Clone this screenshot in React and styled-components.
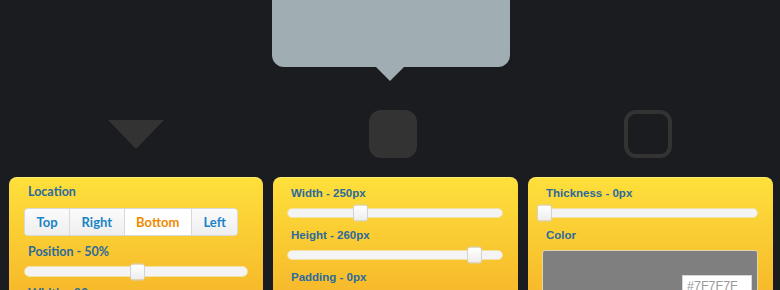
import React from 'react'
import styled, { createGlobalStyle } from 'styled-components'

const GlobalStyle = createGlobalStyle`
    html, body {
        margin: 0;
        padding: 0;
        background: #1a1c20;
    }
    body {
        width: 780px;
        height: 290px;
        overflow: hidden;
        font-family: "Liberation Sans", Arial, sans-serif;
    }
`

const locations = ["Top", "Right", "Bottom", "Left"]

function Slider({ value, $mt, $h }) {
    return (
        <StTrack $mt={$mt} $h={$h}>
            <StHandle style={{ left: `${value}%` }} />
        </StTrack>
    )
}

export default function App() {
    return (
        <>
            <GlobalStyle />
            <StPage>
                <StStage>
                    <StBubble />
                </StStage>

                <StIconRow>
                    <StIconCell>
                        <StTriangle />
                    </StIconCell>
                    <StIconCell $shift="5px">
                        <StSquare />
                    </StIconCell>
                    <StIconCell $shift="5px">
                        <StSquare $outline />
                    </StIconCell>
                </StIconRow>

                <StPanels>
                    {/* 위치 / 크기 */}
                    <StPanel $pad="8px 15px 0 15px">
                        <StLabel $font="Lato">Location</StLabel>
                        <StButtonGroup>
                            {locations.map((name) => (
                                <StButton key={name} $active={name === "Bottom"}>{name}</StButton>
                            ))}
                        </StButtonGroup>
                        <StLabel $font="Lato" $mt="9px">Position - 50%</StLabel>
                        <Slider value={50} $mt="7px" $h="11px" />
                        <StLabel $font="Lato" $mt="10px">Width - 90px</StLabel>
                    </StPanel>

                    <StPanel>
                        <StLabel>Width - 250px</StLabel>
                        <Slider value={33} $mt="8px" />
                        <StLabel $mt="10px">Height - 260px</StLabel>
                        <Slider value={86.5} $mt="8px" />
                        <StLabel $mt="10px">Padding - 0px</StLabel>
                        <Slider value={0} $mt="12px" />
                    </StPanel>

                    <StPanel>
                        <StLabel>Thickness - 0px</StLabel>
                        <Slider value={0} $mt="8px" />
                        <StLabel $mt="10px">Color</StLabel>
                        <StColorBox>
                            <StHexInput readOnly value="#7F7F7F" aria-label="color" />
                        </StColorBox>
                    </StPanel>
                </StPanels>
            </StPage>
        </>
    )
}

const StPage = styled.div`
    padding: 0 7px 0 9px;
`

const StStage = styled.div`
    height: 110px;
    display: flex;
    justify-content: center;
`

const StBubble = styled.div`
    position: relative;
    width: 238px;
    height: 67px;
    background: #a0aeb3;
    border-radius: 0 0 12px 12px;

    &::after {
        content: "";
        position: absolute;
        top: 67px;
        left: 104px;
        border-top: 14px solid #a0aeb3;
        border-left: 14px solid transparent;
        border-right: 14px solid transparent;
    }
`

const StIconRow = styled.div`
    display: grid;
    grid-template-columns: 254px 245px 245px;
    column-gap: 10px;
    height: 48px;
`

const StIconCell = styled.div`
    display: flex;
    justify-content: center;
    align-items: center;
    padding-right: ${({ $shift }) => $shift || "0"};
`

const StTriangle = styled.div`
    width: 0;
    height: 0;
    border-top: 29px solid #333333;
    border-left: 28.5px solid transparent;
    border-right: 28.5px solid transparent;
`

const StSquare = styled.div`
    width: 48px;
    height: 48px;
    box-sizing: border-box;
    border-radius: 12px;
    background: ${({ $outline }) => $outline ? "transparent" : "#333333"};
    border: ${({ $outline }) => $outline ? "4px solid #333333" : "none"};
`

const StPanels = styled.div`
    display: grid;
    grid-template-columns: 254px 245px 245px;
    column-gap: 10px;
    margin-top: 19px;
`

const StPanel = styled.div`
    display: flex;
    flex-direction: column;
    height: 160px;
    padding: ${({ $pad }) => $pad || "9px 15px 0 14px"};
    border-radius: 8px 8px 0 0;
    background: linear-gradient(180deg, #fee03c 0px, #f8c22e 90px, #f5ad28 150px);
    box-shadow: inset 0 1px 0 rgba(255, 255, 255, 0.25);
`

const StLabel = styled.div`
    margin-top: ${({ $mt }) => $mt || "0"};
    padding-left: 4px;
    font-family: ${({ $font }) => $font ? `"${$font}", "Liberation Sans", sans-serif` : `"Liberation Sans", Arial, sans-serif`};
    font-size: ${({ $font }) => $font ? "12.5px" : "11.5px"};
    font-weight: 700;
    line-height: 14px;
    color: #2b6a9e;
    white-space: nowrap;
`

const StButtonGroup = styled.div`
    display: inline-flex;
    align-self: flex-start;
    margin-top: 9px;
    height: 28px;
    box-sizing: border-box;
    border: 1px solid #d9d9d9;
    border-radius: 4px;
    overflow: hidden;
    background: #f4f4f4;
`

const StButton = styled.div`
    display: flex;
    align-items: center;
    padding: 0 11.5px;
    font-family: "Lato", "Liberation Sans", sans-serif;
    font-size: 13px;
    font-weight: 700;
    color: ${({ $active }) => $active ? "#f08a00" : "#1a84c6"};
    background: ${({ $active }) => $active ? "#ffffff" : "linear-gradient(180deg, #fbfbfb, #eeeeee)"};
    border-left: 1px solid #d9d9d9;

    &:first-child {
        border-left: none;
    }
`

const StTrack = styled.div`
    position: relative;
    margin-top: ${({ $mt }) => $mt || "0"};
    height: ${({ $h }) => $h || "10px"};
    flex-shrink: 0;
    box-sizing: border-box;
    background: #f4f4f4;
    border: 1px solid #f0e2a6;
    border-radius: 6px;
`

const StHandle = styled.div`
    position: absolute;
    top: 50%;
    width: 15px;
    height: 17px;
    margin-left: -6px;
    box-sizing: border-box;
    transform: translateY(-50%);
    background: linear-gradient(180deg, #ffffff, #ededed);
    border: 1px solid #d2d2d2;
    border-radius: 3px;
`

const StColorBox = styled.div`
    display: flex;
    justify-content: flex-end;
    align-items: flex-start;
    margin-top: 8px;
    height: 120px;
    padding: 24px 5px 0 0;
    box-sizing: border-box;
    background: #7f7f7f;
    border: 1px solid #e0d6b0;
    border-radius: 3px;
`

const StHexInput = styled.input`
    width: 70px;
    height: 22px;
    box-sizing: border-box;
    padding: 0 4px;
    border: 1px solid #d6d6d6;
    background: #ffffff;
    font-family: "Liberation Sans", Arial, sans-serif;
    font-size: 12.5px;
    color: #9a9a9a;
    outline: none;
`
